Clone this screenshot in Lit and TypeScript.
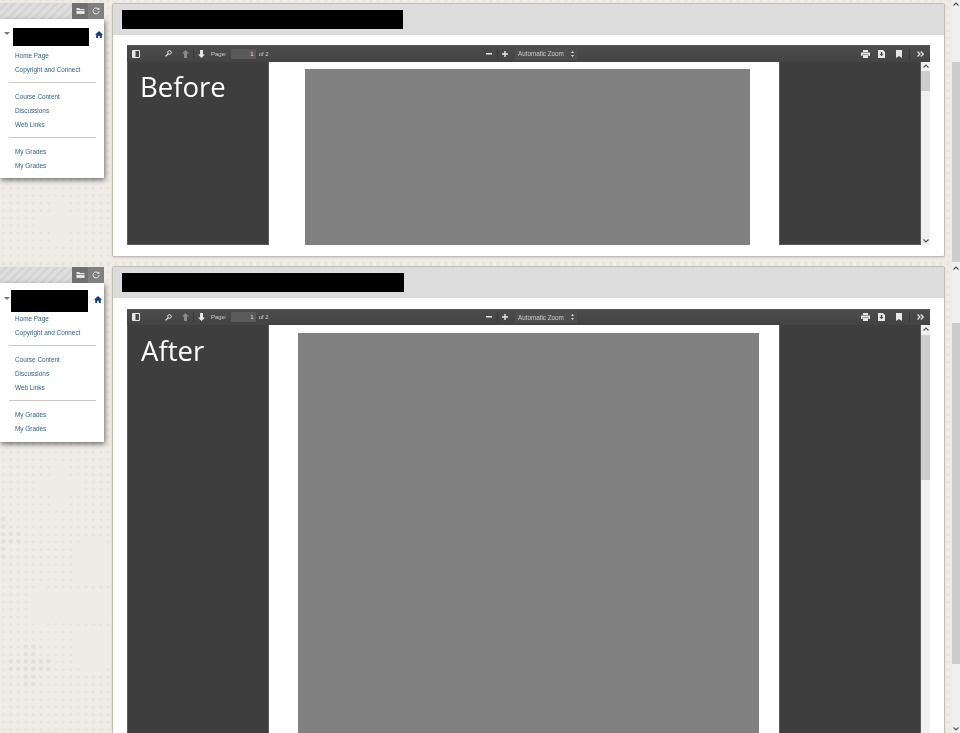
import { LitElement, html, css, svg } from "lit";
import { customElement, property } from "lit/decorators.js";

const SANS = css`"Liberation Sans", Arial, sans-serif`;

const links = [["Home Page", "Copyright and Connect"], ["Course Content", "Discussions", "Web Links"], ["My Grades", "My Grades"]];

const blanks: [number, number, number, number][] = [
  [52, 202, 17, 11], [37, 217, 46, 11], [52, 232, 17, 11],
];
const blanks2: [number, number, number, number][] = [
  [52, 202, 17, 11], [37, 217, 46, 11], [52, 232, 17, 11],
  [82, 276, 22, 4], [74, 284, 46, 34], [37, 322, 8, 4], [30, 329, 90, 27], [37, 359, 8, 4],
  [74, 366, 46, 34], [82, 404, 22, 4],
];
const dots2: [number, number][] = [
  [3.3, 255], [3.3, 262.5], [3.3, 270], [10.8, 270], [18.3, 270], [3.3, 277.5], [10.8, 277.5], [18.3, 277.5], [3.3, 285], [3.3, 292.5],
  [25.8, 382.5], [33.3, 382.5], [25.8, 390], [33.3, 390],
  [10.8, 397.5], [18.3, 397.5], [25.8, 397.5], [33.3, 397.5], [40.8, 397.5], [48.3, 397.5],
  [10.8, 405], [18.3, 405], [25.8, 405], [33.3, 405], [40.8, 405], [48.3, 405],
  [25.8, 412.5], [33.3, 412.5], [25.8, 420], [33.3, 420],
];

const arrowUp = html`<svg width="6" height="4" viewBox="0 0 6 4"><path d="M.5 3.5 3 1l2.5 2.5" fill="none" stroke="#505050" stroke-width="1.1"/></svg>`;
const arrowDown = html`<svg width="6" height="4" viewBox="0 0 6 4"><path d="M.5.5 3 3 5.5.5" fill="none" stroke="#505050" stroke-width="1.1"/></svg>`;

@customElement("scroll-bar")
class ScrollBar extends LitElement {
  @property({ type: Number }) start = 0;
  @property({ type: Number }) size = 0;
  static styles = css`
    :host { display: flex; flex-direction: column; height: 100%; background: #f0f0f0; align-items: stretch; overflow: hidden; }
    .arrow { height: 8px; flex: none; display: flex; align-items: center; justify-content: center; background: #f0f0f0; }
    .thumb { background: #cdcdcd; flex: none; }
    .gap { flex: none; }
    .fill { flex: 1; }
  `;
  render() {
    return html`<div class="arrow">${arrowUp}</div><div class="gap" style="height:${this.start}px"></div><div class="thumb" style="height:${this.size}px"></div><div class="fill"></div><div class="arrow">${arrowDown}</div>`;
  }
}

@customElement("course-menu")
class CourseMenu extends LitElement {
  @property() variant = "before";
  static styles = css`
    :host { display: block; width: 104px; flex: none; margin-top: 3px; position: relative; font-family: ${SANS}; }
    .top { display: flex; height: 16px; background: repeating-linear-gradient(135deg, #dedede 0 3px, #d5d5d5 3px 6px); }
    .top .grow { flex: 1; }
    .btn { width: 16px; background: #808080; display: flex; align-items: center; justify-content: center; }
    .btn.dark { background: #707070; }
    .panel { background: #fff; padding: 9px 0 6px; box-shadow: 1px 2px 5px rgba(0,0,0,.55); height: 159px; box-sizing: border-box; }
    .title { display: flex; align-items: flex-start; height: 18px; }
    .tri { width: 0; height: 0; border: 3px solid transparent; border-top: 3px solid #777; border-bottom: 0; margin: 4px 0 0 4px; }
    .block { width: 76px; height: 18px; background: #000; margin-left: 3px; }
    .home { margin: 3px 0 0 6px; }
    .after .title { margin-bottom: -3px; margin-top: -2px; height: 22px; }
    .after .block { width: 77px; height: 22px; margin-left: 1px; }
    .after .tri { margin-top: 7px; }
    .after .home { margin-top: 6px; }
    .links { display: flex; flex-direction: column; }
    .group { padding: 3px 0 5px 15px; }
    .group + .group { border-top: 1px solid #c8c8c8; margin: 0 8px 0 9px; padding: 7px 0 5px 6px; }
    .group a { display: block; font-size: 6.400px; line-height: 14px; color: #2f5f92; white-space: nowrap; will-change: opacity; }
  `;
  render() {
    return html`<div class=${this.variant}>
      <div class="top"><div class="grow"></div>
        <div class="btn dark"><svg width="9" height="8" viewBox="0 0 9 8"><path d="M.5 1h3v1h5v1h-8zM.5 3.700h8V7h-8z" fill="#e6e6e6"/></svg></div>
        <div class="btn"><svg width="8" height="8" viewBox="0 0 8 8"><path d="M6.500 2.300A3 3 0 1 0 7 4" fill="none" stroke="#ececec" stroke-width="1"/><path d="M4.800 2.600 7.400 3V.4z" fill="#ececec"/></svg></div>
      </div>
      <div class="panel">
        <div class="title"><span class="tri"></span><span class="block"></span>
          <svg class="home" width="8" height="7" viewBox="0 0 8 7"><path d="M4 0 0 3.700h1.200V7h2V4.800h1.600V7h2V3.700H8z" fill="#0e3c7c"/></svg>
        </div>
        <div class="links">
          ${links.map((g) => html`<div class="group">${g.map((l) => html`<a>${l}</a>`)}</div>`)}
        </div>
      </div>
    </div>`;
  }
}

@customElement("pdf-toolbar")
class PdfToolbar extends LitElement {
  static styles = css`
    :host { display: grid; grid-template-columns: 1fr auto 1fr; align-items: center; height: 100%; background: linear-gradient(#4d4d4d, #434343); font-family: ${SANS}; color: #cfcfcf; font-size: 6px; box-shadow: inset 0 1px 0 #555; }
    .left, .center, .right { display: flex; align-items: center; }
    .left { padding-left: 5px; }
    .right { justify-content: flex-end; padding-right: 6px; }
    .center { margin-right: -6px; }
    svg { display: block; flex: none; }
    .txt { will-change: opacity; }
    .field { width: 25px; height: 10px; background: #5a5a5a; border-radius: 1px; text-align: right; line-height: 10px; padding-right: 2px; box-sizing: border-box; margin: 0 3px 0 4px; color: #e6e6e6; }
    .sep { width: 1px; height: 10px; background: #393939; margin: 0 4px; }
    .ml6 { margin-left: 6px; }
    .ml8 { margin-left: 8px; }
    .ml10 { margin-left: 10px; }
    .ml11 { margin-left: 11px; }
    .ml25 { margin-left: 25px; }
    .sep.m7 { margin: 0 7px; }
    .sep.m5 { margin: 0 4px 0 5px; }
    .zoom { width: 62px; height: 12px; background: #4e4e4e; border-radius: 1px; display: flex; align-items: center; justify-content: space-between; padding: 0 3px; box-sizing: border-box; margin-left: 7px; white-space: nowrap; font-size: 6.300px; }
  `;
  render() {
    return html`
      <div class="left">
        <svg width="8" height="8" viewBox="0 0 8 8"><path d="M.5.5h7v7h-7zM3 .5v7" fill="none" stroke="#e6e6e6"/><path d="M1 1h2v6H1z" fill="#e6e6e6"/></svg>
        <svg class="ml25" width="7" height="7" viewBox="0 0 7 7"><circle cx="4.500" cy="2.500" r="1.800" fill="none" stroke="#e6e6e6"/><path d="M3.200 3.800.6 6.400" stroke="#e6e6e6" stroke-width="1.300"/></svg>
        <svg class="ml10" width="7" height="8" viewBox="0 0 7 8"><path d="M3.500 0 7 3.500H5V8H2V3.500H0z" fill="#8a8a8a"/></svg>
        <span class="sep"></span>
        <svg width="7" height="8" viewBox="0 0 7 8"><path d="M3.500 8 7 4.500H5V0H2v4.500H0z" fill="#e6e6e6"/></svg>
        <span class="ml6 txt">Page:</span>
        <span class="field txt">1</span>
        <span class="txt">of 2</span>
      </div>
      <div class="center">
        <svg width="6" height="2" viewBox="0 0 6 2"><path d="M0 0h6v1.500H0z" fill="#e6e6e6"/></svg>
        <span class="sep m5"></span>
        <svg width="6" height="6" viewBox="0 0 6 6"><path d="M2.300 0h1.400v2.300H6v1.400H3.700V6H2.300V3.700H0V2.300h2.300z" fill="#e6e6e6"/></svg>
        <span class="zoom"><span class="txt">Automatic Zoom</span><svg width="3" height="6" viewBox="0 0 3 6"><path d="M1.500 0 3 2H0zM1.500 6 3 4H0z" fill="#ddd"/></svg></span>
      </div>
      <div class="right">
        <svg width="9" height="8" viewBox="0 0 9 8"><path d="M2 0h5v2H2zM0 2.500h9V6H7.500V4.500h-6V6H0zM2 5h5v3H2z" fill="#e6e6e6"/></svg>
        <svg class="ml8" width="7" height="8" viewBox="0 0 7 8"><path d="M0 0h5l2 2v6H0z" fill="#e6e6e6"/><path d="M2.800 2h1.400v2h1.200L3.500 6.200 1.600 4h1.200z" fill="#444"/></svg>
        <svg class="ml11" width="6" height="8" viewBox="0 0 6 8"><path d="M0 0h6v8L3 6 0 8z" fill="#e6e6e6"/></svg>
        <span class="sep m7"></span>
        <svg width="7" height="6" viewBox="0 0 7 6"><path d="M.5.5 3 3 .5 5.500M3.800.5 6.300 3 3.800 5.500" fill="none" stroke="#e6e6e6" stroke-width="1.200"/></svg>
      </div>`;
  }
}

@customElement("doc-card")
class DocCard extends LitElement {
  @property() variant = "before";
  @property() label = "";
  static styles = css`
    :host { display: block; flex: 1; min-width: 0; margin-left: 8px; margin-top: 3px; align-self: flex-start; }
    :host([variant="after"]) { margin-top: 2px; }
    .card { background: #fff; border: 1px solid #bfbdb4; border-radius: 2px; padding: 0 0 11px; box-shadow: 0 1px 2px rgba(0,0,0,.12); }
    .head { background: #dcdcdc; height: 31px; display: flex; align-items: center; padding-left: 9px; box-sizing: border-box; }
    .bar { width: 281px; height: 19px; background: #000; }
    .after .bar { width: 282px; }
    .viewer { margin: 10px 14px 0; width: 803px; display: grid; grid-template-rows: 17px 183px; overflow: hidden; }
    .after .viewer { margin-top: 11px; grid-template-rows: 16px 500px; }
    .content { display: grid; grid-template-columns: 142px 510px 142px 9px; min-height: 0; }
    .side { background: #3e3e3e; box-shadow: inset 0 -1px 0 #5c5c5c, inset 1px 0 0 #5c5c5c, inset -1px 0 0 #5c5c5c; }
    .label { color: #fff; font: 27.500px/1 "Open Sans", sans-serif; padding: 11px 0 0 13px; will-change: opacity; }
    .after .label { padding: 12px 0 0 14px; }
    .mid { background: #fff; padding: 7px 0 0 36px; overflow: hidden; }
    .after .mid { padding: 8px 0 0 29px; }
    .page { background: #808080; width: 445px; height: 500px; }
    .after .page { width: 461px; }
  `;
  render() {
    const after = this.variant === "after";
    return html`<div class="card ${this.variant}">
      <div class="head"><div class="bar"></div></div>
      <div class="viewer">
        <pdf-toolbar></pdf-toolbar>
        <div class="content">
          <div class="side"><div class="label">${this.label}</div></div>
          <div class="mid"><div class="page"></div></div>
          <div class="side"></div>
          <scroll-bar .start=${after ? 2 : 1} .size=${after ? 145 : 20}></scroll-bar>
        </div>
      </div>
    </div>`;
  }
}

@customElement("app-root")
class AppRoot extends LitElement {
  static styles = css`
    :host { display: block; width: 960px; height: 733px; overflow: hidden; background: #eeece5; }
    .frame { display: flex; position: relative; overflow: hidden; }
    .frame.one { height: 264px; }
    .frame.two { height: 469px; }
    .backdrop { position: absolute; inset: 0; width: 100%; height: 100%; }
    course-menu, doc-card { position: relative; }
    .rail { flex: none; width: 8.500px; margin-left: 6.500px; position: relative; }
  `;
  backdrop(id: string, rects: [number, number, number, number][], dots: [number, number][]) {
    return html`<svg class="backdrop" aria-hidden="true">
      <defs>
        <pattern id=${id} patternUnits="userSpaceOnUse" width="7.5" height="7.5" patternTransform="translate(-0.4 -3.2)">
          <path d="M3.750 2.250v3M2.250 3.750h3" stroke="#e3e1d8" stroke-width="1"/>
        </pattern>
      </defs>
      <rect width="100%" height="100%" fill="url(#${id})"/>
      ${rects.map(([x, y, w, h]) => svg`<rect x=${x} y=${y} width=${w} height=${h} fill="#eeece5"/>`)}
      ${dots.map(([x, y]) => svg`<circle cx=${x} cy=${y} r="2.300" fill="#e2e0d7"/>`)}
    </svg>`;
  }
  render() {
    return html`
      <div class="frame one">
        ${this.backdrop("plus-a", blanks, [])}
        <course-menu variant="before"></course-menu>
        <doc-card variant="before" label="Before"></doc-card>
        <div class="rail"><scroll-bar .start=${54} .size=${200}></scroll-bar></div>
      </div>
      <div class="frame two">
        ${this.backdrop("plus-b", blanks2, dots2)}
        <course-menu variant="after"></course-menu>
        <doc-card variant="after" label="After"></doc-card>
        <div class="rail"><scroll-bar .start=${51} .size=${341}></scroll-bar></div>
      </div>`;
  }
}
